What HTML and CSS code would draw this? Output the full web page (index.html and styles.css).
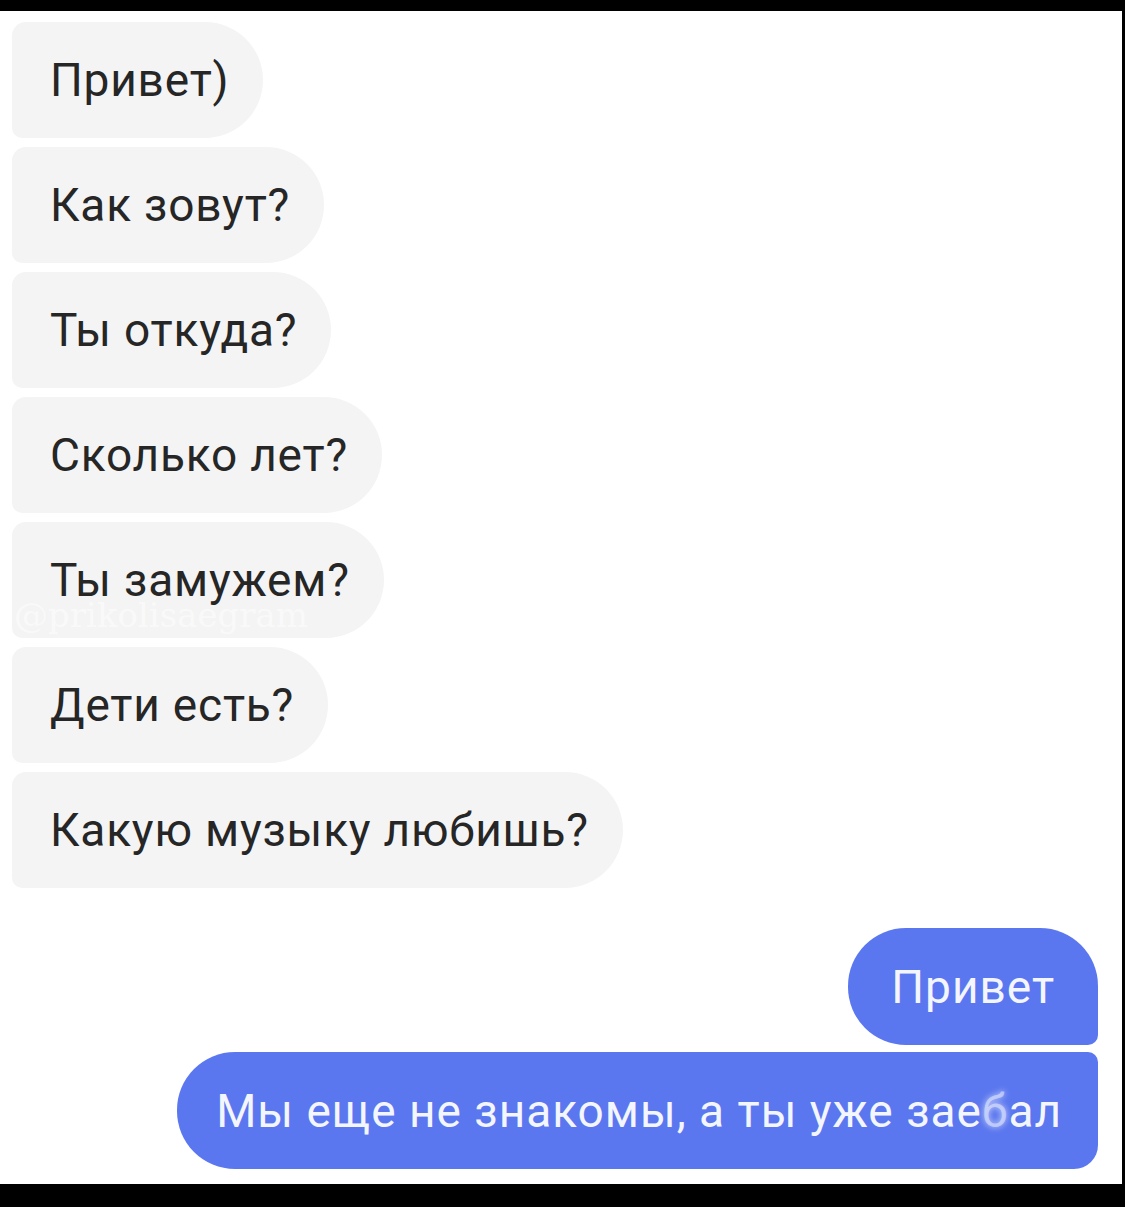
FILE: index.html
```html
<!DOCTYPE html>
<html lang="ru">
<head>
<meta charset="UTF-8">
<title>Чат</title>
<link rel="stylesheet" href="styles.css">
</head>
<body>
<div class="frame">
  <div class="chat">
    <div class="msg in">Привет)</div>
    <div class="msg in">Как зовут?</div>
    <div class="msg in">Ты откуда?</div>
    <div class="msg in">Сколько лет?</div>
    <div class="msg in">Ты замужем?</div>
    <div class="msg in">Дети есть?</div>
    <div class="msg in">Какую музыку любишь?</div>

    <div class="outgoing">
      <div class="msg out first">Привет</div>
      <div class="msg out last">Мы еще не знакомы, а ты уже зае<span class="blur">б</span>ал</div>
    </div>
  </div>
  <div class="mark">@prikolisaegram</div>
</div>
</body>
</html>
```

FILE: styles.css
```css
* {
  box-sizing: border-box;
}
html, body {
  margin: 0;
  padding: 0;
  background: #000;
}
body {
  font-family: Roboto, "Liberation Sans", Arial, sans-serif;
}

.frame {
  position: relative;
  width: 1125px;
  height: 1207px;
  background: #fff;
  border-top: 11px solid #000;
  border-right: 3px solid #000;
  border-bottom: 23px solid #000;
}

.chat {
  display: flex;
  flex-direction: column;
  align-items: flex-start;
  gap: 9px;
  padding: 11px 24px 0 12px;
}

.msg {
  display: flex;
  align-items: center;
  height: 116px;
  font-size: 46px;
  letter-spacing: 1px;
  white-space: nowrap;
}

.in {
  background: #f4f4f4;
  color: #262626;
  letter-spacing: 0.8px;
  padding: 0 34px 0 38px;
  border-radius: 14px 58px 58px 10px;
}

.outgoing {
  display: flex;
  flex-direction: column;
  align-items: flex-end;
  gap: 7px;
  align-self: stretch;
  margin-top: 31px;
}

.out {
  background: #5b77ef;
  color: #f4f6ff;
  height: 117px;
}
.out.first {
  padding: 0 43px 0 43px;
  border-radius: 58px 58px 10px 58px;
}
.out.last {
  padding: 0 36px 0 39px;
  border-radius: 58px 10px 24px 58px;
}

/* censored letter */
.blur {
  color: rgba(235, 240, 255, 0.55);
  text-shadow: 0 0 6px rgba(235, 240, 255, 0.8);
}

.mark {
  position: absolute;
  left: 14px;
  top: 584px;
  font-family: "DejaVu Serif", serif;
  font-size: 34px;
  color: rgba(255, 255, 255, 0.5);
  pointer-events: none;
}
```
